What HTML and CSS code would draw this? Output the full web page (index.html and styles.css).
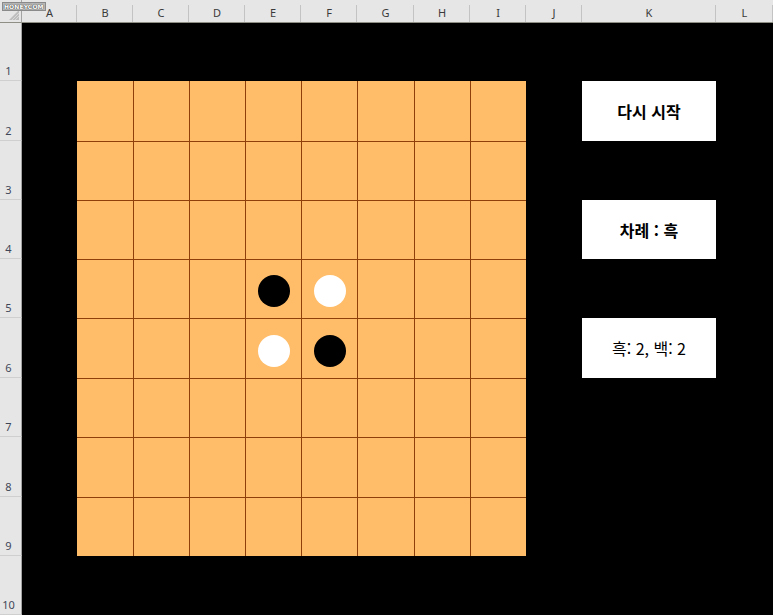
FILE: index.html
```html
<!DOCTYPE html>
<html lang="ko">
<head>
<meta charset="utf-8">
<title>Othello</title>
<link rel="stylesheet" href="styles.css">
</head>
<body>
<div class="sheet">
  <div class="watermark">HONEYCOM</div>
  <div class="colheads">
    <div class="corner">
      <svg class="selall" width="10" height="10" viewBox="0 0 10 10"><polygon points="10,0 10,10 0,10" fill="#bdbdbd"/><line x1="3" y1="10" x2="10" y2="3" stroke="#d8d8d8" stroke-width="1"/><line x1="6" y1="10" x2="10" y2="6" stroke="#d8d8d8" stroke-width="1"/></svg>
    </div>
    <div class="ch w55">A</div>
    <div class="ch w56">B</div>
    <div class="ch w56">C</div>
    <div class="ch w56">D</div>
    <div class="ch w56">E</div>
    <div class="ch w56">F</div>
    <div class="ch w57">G</div>
    <div class="ch w56">H</div>
    <div class="ch w56">I</div>
    <div class="ch w56">J</div>
    <div class="ch w134">K</div>
    <div class="ch w57">L</div>
  </div>
  <div class="body">
    <div class="rowheads">
      <div class="rh h58">1</div>
      <div class="rh h60">2</div>
      <div class="rh h59">3</div>
      <div class="rh h59">4</div>
      <div class="rh h59">5</div>
      <div class="rh h60">6</div>
      <div class="rh h59">7</div>
      <div class="rh h60">8</div>
      <div class="rh h59">9</div>
      <div class="rh h59">10</div>
    </div>
    <div class="grid">
      <div class="board">
        <div class="cell"></div><div class="cell"></div><div class="cell"></div><div class="cell"></div><div class="cell"></div><div class="cell"></div><div class="cell"></div><div class="cell"></div>
        <div class="cell"></div><div class="cell"></div><div class="cell"></div><div class="cell"></div><div class="cell"></div><div class="cell"></div><div class="cell"></div><div class="cell"></div>
        <div class="cell"></div><div class="cell"></div><div class="cell"></div><div class="cell"></div><div class="cell"></div><div class="cell"></div><div class="cell"></div><div class="cell"></div>
        <div class="cell"></div><div class="cell"></div><div class="cell"></div><div class="cell"><span class="stone black"></span></div><div class="cell"><span class="stone white"></span></div><div class="cell"></div><div class="cell"></div><div class="cell"></div>
        <div class="cell"></div><div class="cell"></div><div class="cell"></div><div class="cell"><span class="stone white"></span></div><div class="cell"><span class="stone black"></span></div><div class="cell"></div><div class="cell"></div><div class="cell"></div>
        <div class="cell"></div><div class="cell"></div><div class="cell"></div><div class="cell"></div><div class="cell"></div><div class="cell"></div><div class="cell"></div><div class="cell"></div>
        <div class="cell"></div><div class="cell"></div><div class="cell"></div><div class="cell"></div><div class="cell"></div><div class="cell"></div><div class="cell"></div><div class="cell"></div>
        <div class="cell"></div><div class="cell"></div><div class="cell"></div><div class="cell"></div><div class="cell"></div><div class="cell"></div><div class="cell"></div><div class="cell"></div>
      </div>
      <div class="btn b1 bold">다시 시작</div>
      <div class="btn b2 bold">차례 : 흑</div>
      <div class="btn b3">흑: 2, 백: 2</div>
    </div>
  </div>
</div>
</body>
</html>
```

FILE: styles.css
```css
html, body {
  margin: 0;
  padding: 0;
  background: #000;
}
body {
  width: 773px;
  height: 615px;
  overflow: hidden;
  font-family: "Noto Sans", "Noto Sans CJK KR", sans-serif;
}
.sheet {
  position: relative;
  width: 773px;
  height: 615px;
}
.watermark {
  position: absolute;
  top: 2px;
  left: 2px;
  height: 7px;
  padding: 0 1px;
  background: #b9b9b9;
  border: 1px solid #8a8a8a;
  color: #fff;
  font-family: "DejaVu Sans", sans-serif;
  font-weight: bold;
  font-size: 6px;
  line-height: 7px;
  letter-spacing: 0.1px;
  text-shadow: 0 0 1px #333, 0 0 1px #333;
}
.colheads {
  display: flex;
  height: 23px;
}
.corner {
  width: 22px;
  box-sizing: border-box;
  background: #e6e6e6;
  border-right: 1px solid #a3a3a3;
  border-bottom: 1px solid #8f8f86;
  display: flex;
  align-items: flex-end;
  justify-content: flex-end;
  padding: 0 2px 2px 0;
}
.selall {
  display: block;
}
.ch {
  box-sizing: border-box;
  height: 23px;
  background: linear-gradient(#e6e6e6 0 5px, #c3c3c3 5px) right top / 1px 100% no-repeat, #e6e6e6;
  border-bottom: 1px solid #8f8f86;
  color: #3a3a3a;
  font-size: 11px;
  display: flex;
  align-items: center;
  justify-content: center;
  padding-top: 2px;
}
.w55 { width: 55px; }
.w56 { width: 56px; }
.w57 { width: 57px; }
.w134 { width: 134px; }
.body {
  display: flex;
}
.rowheads {
  width: 22px;
  display: flex;
  flex-direction: column;
}
.rh {
  box-sizing: border-box;
  background: #e6e6e6;
  border-right: 1px solid #a3a3a3;
  border-bottom: 1px solid #cfcfcf;
  color: #3f4658;
  font-size: 11px;
  display: flex;
  align-items: flex-end;
  justify-content: center;
  padding: 0 4px 2px 0;
}
.h58 { height: 58px; }
.h59 { height: 59px; }
.h60 { height: 60px; }
.grid {
  display: grid;
  grid-template-columns: 55px 56px 56px 56px 56px 56px 57px 56px 56px 56px 134px 57px;
  grid-template-rows: 58px 60px 59px 59px 59px 60px 59px 60px 59px 59px;
}
.board {
  grid-column: 2 / 10;
  grid-row: 2 / 10;
  display: grid;
  grid-template-columns: 56px 56px 56px 56px 56px 57px 56px 56px;
  grid-template-rows: 60px 59px 59px 59px 60px 59px 60px 59px;
  background: #ffbd69;
}
.cell {
  box-sizing: border-box;
  border-left: 1px solid #8f3f0a;
  border-top: 1px solid #8f3f0a;
  display: flex;
  align-items: center;
  justify-content: center;
}
.cell:nth-child(8n+1) {
  border-left: none;
}
.cell:nth-child(-n+8) {
  border-top: none;
}
.stone {
  display: block;
  width: 32px;
  height: 32px;
  border-radius: 50%;
  margin-top: 4px;
}
.black { background: #000; }
.white { background: #fff; }
.btn {
  grid-column: 11;
  background: #fff;
  display: flex;
  align-items: center;
  justify-content: center;
  color: #000;
  font-family: "Noto Sans CJK KR", sans-serif;
  font-size: 16px;
}
.bold { font-weight: bold; }
.b1 { grid-row: 2; }
.b2 { grid-row: 4; }
.b3 { grid-row: 6; }
```
